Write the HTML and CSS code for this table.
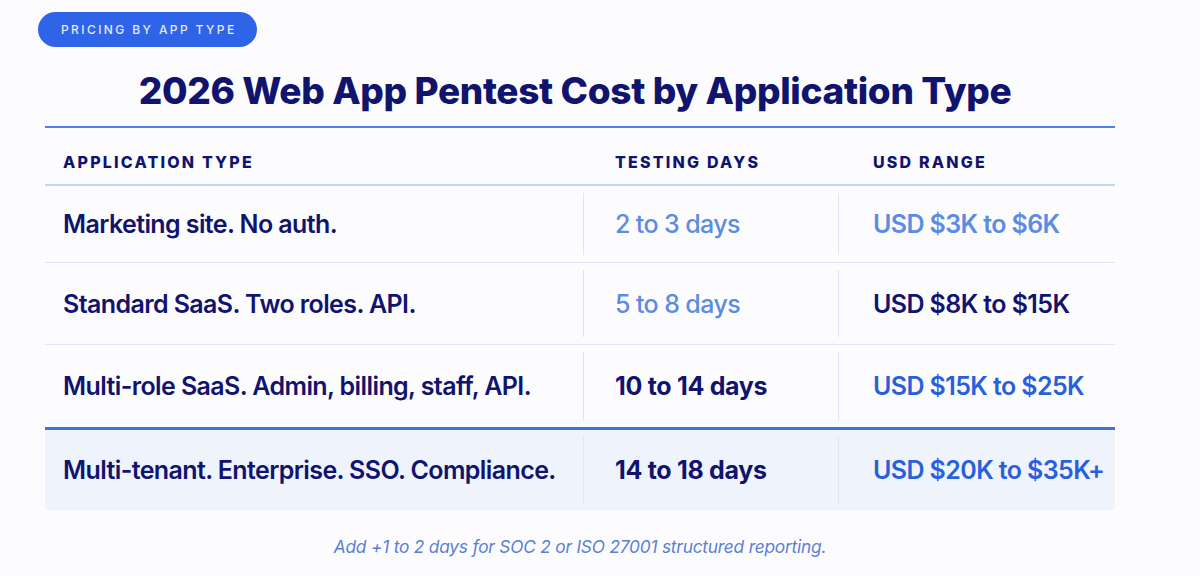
FILE: index.html
```html
<!DOCTYPE html>
<html lang="en">
<head>
<meta charset="utf-8">
<title>2026 Web App Pentest Cost by Application Type</title>
<link rel="stylesheet" href="styles.css">
</head>
<body>
<div class="page">
  <div class="pill">PRICING BY APP TYPE</div>
  <div class="card">
    <h1 class="title">2026 Web App Pentest Cost by Application Type</h1>
    <div class="table">
      <div class="row head">
        <div class="cell c1">APPLICATION TYPE</div>
        <div class="cell c2">TESTING DAYS</div>
        <div class="cell c3">USD RANGE</div>
      </div>
      <div class="row first">
        <div class="cell c1 navy">Marketing site. No auth.</div>
        <div class="cell c2 light">2 to 3 days</div>
        <div class="cell c3 light">USD $3K to $6K</div>
      </div>
      <div class="row">
        <div class="cell c1 navy">Standard SaaS. Two roles. API.</div>
        <div class="cell c2 light">5 to 8 days</div>
        <div class="cell c3 navy">USD $8K to $15K</div>
      </div>
      <div class="row before-featured">
        <div class="cell c1 navy">Multi-role SaaS. Admin, billing, staff, API.</div>
        <div class="cell c2 navy strong">10 to 14 days</div>
        <div class="cell c3 bright">USD $15K to $25K</div>
      </div>
      <div class="row featured">
        <div class="cell c1 navy">Multi-tenant. Enterprise. SSO. Compliance.</div>
        <div class="cell c2 navy strong">14 to 18 days</div>
        <div class="cell c3 bright">USD $20K to $35K+</div>
      </div>
    </div>
    <p class="note">Add +1 to 2 days for SOC 2 or ISO 27001 structured reporting.</p>
  </div>
</div>
</body>
</html>
```

FILE: styles.css
```css
* { box-sizing: border-box; }
html, body { margin: 0; padding: 0; }
body {
  background: #fcfcfe;
  font-family: "Inter", "Liberation Sans", sans-serif;
  width: 1200px;
  height: 576px;
  overflow: hidden;
}
.page {
  padding: 12px 0 0 38px;
}
.pill {
  width: 219px;
  height: 35px;
  border-radius: 18px;
  background: #2f64e8;
  color: #e3eafc;
  font-size: 12px;
  font-weight: 500;
  letter-spacing: 2.4px;
  display: flex;
  align-items: center;
  padding-left: 23px;
}
.card {
  width: 1070px;
  margin-left: 7px;
}
.title {
  margin: 0;
  text-align: center;
  font-size: 37px;
  font-weight: 800;
  letter-spacing: -0.35px;
  color: #10146e;
  line-height: 44px;
  padding: 22px 0 13px 0;
  border-bottom: 2px solid #4f80e0;
  text-indent: -10px;
}
.table {
  display: flex;
  flex-direction: column;
}
.row {
  display: grid;
  grid-template-columns: 538px 255px 277px;
  height: 82px;
  border-bottom: 1px solid #dfe7f5;
  align-items: stretch;
}
.row.first {
  height: 77px;
}
.row.head {
  height: 58px;
  border-bottom: 2px solid #c5d5f2;
}
.row.head .cell {
  font-size: 16px;
  font-weight: 800;
  letter-spacing: 2.2px;
  color: #10146e;
  padding-top: 12px;
}
.cell {
  display: flex;
  align-items: center;
  font-size: 25px;
  font-weight: 600;
  letter-spacing: -0.6px;
}
.c1 { padding-left: 18px; }
.c2 { padding-left: 32px; }
.c3 { padding-left: 35px; }
.row:not(.head) .c2,
.row:not(.head) .c3 {
  position: relative;
}
.row:not(.head) .c2::before,
.row:not(.head) .c3::before {
  content: "";
  position: absolute;
  left: 0;
  top: 7px;
  bottom: 7px;
  border-left: 1px solid #dde5f3;
}
.navy { color: #10146e; }
.strong { font-weight: 700; letter-spacing: -0.3px; }
.light { color: #5b8be2; font-weight: 500; }
.c3.light { font-weight: 600; }
.bright { color: #2a5fdc; }
.row.before-featured {
  height: 85px;
  border-bottom: 3px solid #3f72dc;
}
.row.featured {
  height: 80px;
  background: #eef3fc;
  border-bottom: none;
  border-radius: 0 0 4px 4px;
}
.note {
  margin: 26px 0 0 0;
  text-align: center;
  font-style: italic;
  font-size: 17.3px;
  color: #5a7fd6;
  letter-spacing: -0.2px;
}
```
